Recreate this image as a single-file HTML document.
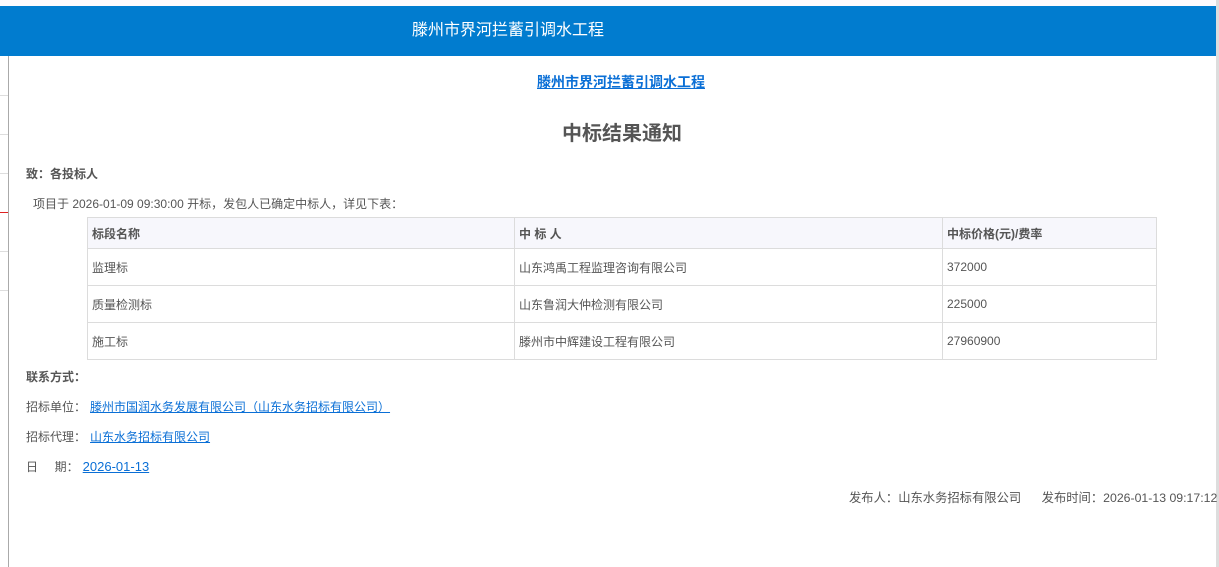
<!DOCTYPE html>
<html><head><meta charset="utf-8"><style>
*{margin:0;padding:0;box-sizing:border-box}
body{width:1219px;height:567px;background:#fff;position:relative;overflow:hidden;font-family:"Liberation Sans","Noto Sans CJK SC",sans-serif;font-size:12px;color:#555}
.a{position:absolute;white-space:nowrap}
.bar{position:absolute;left:0;top:6px;width:1216px;height:50px;background:#017ccf;color:#fff;font-size:16px;line-height:50px;padding-left:412px}
.lk{color:#0a6fd6;text-decoration:underline}
table{position:absolute;left:87px;top:217px;width:1070px;border-collapse:collapse}
td{border:1px solid #dcdcdc;padding:0 4px;height:37px;font-size:12px;color:#555}
tr.h td{background:#f7f7fc;font-weight:bold;height:31px}
</style></head><body>
<div class="a" style="left:0;top:0;width:1219px;height:6px;background:#fdfafd"></div>
<div class="bar">滕州市界河拦蓄引调水工程</div>
<div class="a" style="left:8px;top:56px;width:1px;height:511px;background:#aaa"></div>
<div class="a" style="left:1216px;top:0;width:3px;height:567px;background:#ddd"></div>
<div class="a" style="left:0;top:95px;width:8px;height:1px;background:#ddd"></div>
<div class="a" style="left:0;top:134px;width:8px;height:1px;background:#ddd"></div>
<div class="a" style="left:0;top:173px;width:8px;height:1px;background:#ddd"></div>
<div class="a" style="left:0;top:212px;width:8px;height:1px;background:#d22"></div>
<div class="a" style="left:0;top:251px;width:8px;height:1px;background:#ddd"></div>
<div class="a" style="left:0;top:290px;width:8px;height:1px;background:#ddd"></div>
<div class="a lk" style="left:537px;top:72px;font-size:14px;font-weight:bold">滕州市界河拦蓄引调水工程</div>
<div class="a" style="left:562px;top:117px;font-size:20px;font-weight:bold;color:#555">中标结果通知</div>
<div class="a" style="left:26px;top:165px;font-weight:bold">致：各投标人</div>
<div class="a" style="left:33px;top:195px">项目于 2026-01-09 09:30:00 开标，发包人已确定中标人，详见下表：</div>
<table>
<tr class="h"><td style="width:427px">标段名称</td><td style="width:428px">中 标 人</td><td>中标价格(元)/费率</td></tr>
<tr><td>监理标</td><td>山东鸿禹工程监理咨询有限公司</td><td>372000</td></tr>
<tr><td>质量检测标</td><td>山东鲁润大仲检测有限公司</td><td>225000</td></tr>
<tr><td>施工标</td><td>滕州市中辉建设工程有限公司</td><td>27960900</td></tr>
</table>
<div class="a" style="left:26px;top:368px;font-weight:bold">联系方式：</div>
<div class="a" style="left:26px;top:398px">招标单位：<span class="lk" style="margin-left:4px">滕州市国润水务发展有限公司（山东水务招标有限公司）</span></div>
<div class="a" style="left:26px;top:428px">招标代理：<span class="lk" style="margin-left:4px">山东水务招标有限公司</span></div>
<div class="a" style="left:26px;top:458px">日&nbsp;&nbsp;&nbsp;&nbsp;&nbsp;期：<span class="lk" style="margin-left:4px;font-size:13px">2026-01-13</span></div>
<div class="a" style="left:849px;top:488px;font-size:12.3px">发布人：山东水务招标有限公司&nbsp;&nbsp;&nbsp;&nbsp;&nbsp;&nbsp;发布时间：2026-01-13 09:17:12</div>
</body></html>
